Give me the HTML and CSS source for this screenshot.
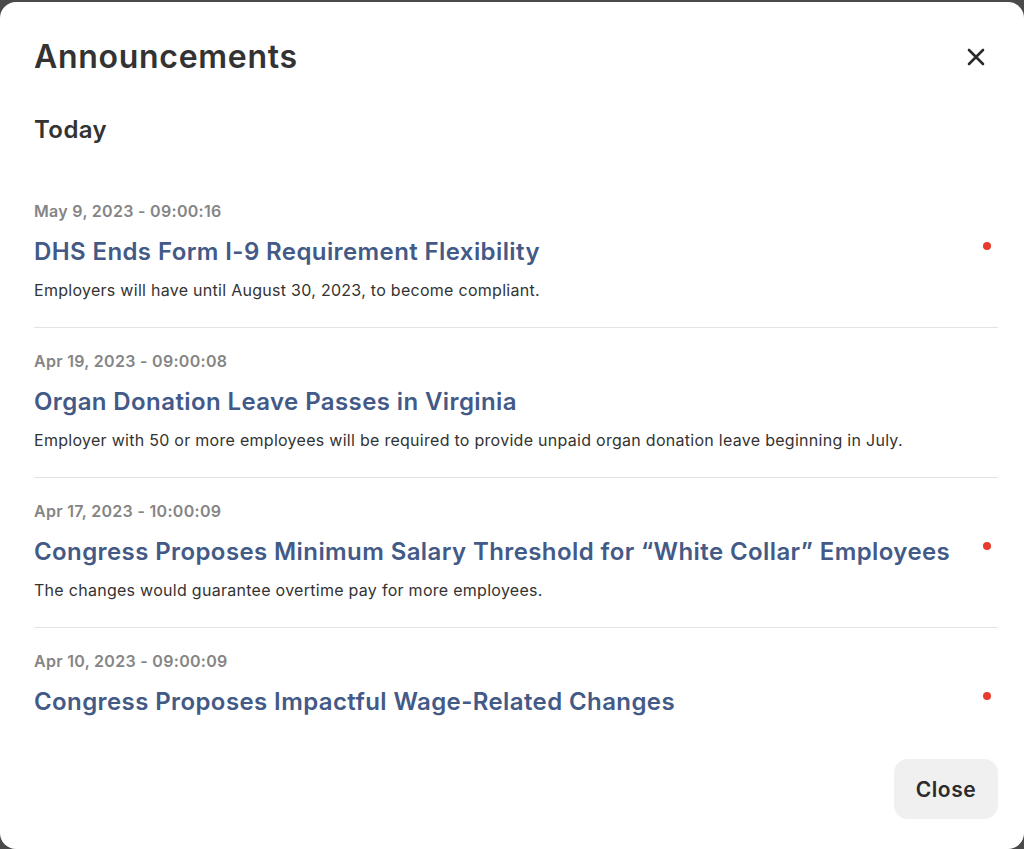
FILE: index.html
```html
<!DOCTYPE html>
<html lang="en">
<head>
  <meta charset="UTF-8" />
  <meta name="viewport" content="width=device-width, initial-scale=1.0"/>
  <title>Announcements</title>
  <link rel="stylesheet" href="styles.css">
</head>
<body>
  <div class="modal">
    <div class="modal-header">
      <h1>Announcements</h1>
      <button class="icon-close" aria-label="Close">
        <svg width="18" height="18" viewBox="0 0 18 18"><path d="M2 2L16 16M16 2L2 16" stroke="#2b2b2b" stroke-width="2.6" stroke-linecap="round"/></svg>
      </button>
    </div>

    <h2 class="group">Today</h2>

    <ul class="list">
      <li class="item">
        <div class="item-body">
          <div class="date">May 9, 2023 - 09:00:16</div>
          <div class="title">DHS Ends Form I-9 Requirement Flexibility</div>
          <div class="desc">Employers will have until August 30, 2023, to become compliant.</div>
        </div>
        <span class="dot"></span>
      </li>
      <li class="item">
        <div class="item-body">
          <div class="date">Apr 19, 2023 - 09:00:08</div>
          <div class="title">Organ Donation Leave Passes in Virginia</div>
          <div class="desc">Employer with 50 or more employees will be required to provide unpaid organ donation leave beginning in July.</div>
        </div>
      </li>
      <li class="item">
        <div class="item-body">
          <div class="date">Apr 17, 2023 - 10:00:09</div>
          <div class="title">Congress Proposes Minimum Salary Threshold for “White Collar” Employees</div>
          <div class="desc">The changes would guarantee overtime pay for more employees.</div>
        </div>
        <span class="dot"></span>
      </li>
      <li class="item">
        <div class="item-body">
          <div class="date">Apr 10, 2023 - 09:00:09</div>
          <div class="title">Congress Proposes Impactful Wage-Related Changes</div>
        </div>
        <span class="dot"></span>
      </li>
    </ul>

    <div class="modal-footer">
      <button class="btn">Close</button>
    </div>
  </div>
</body>
</html>
```

FILE: styles.css
```css
html, body {
  height: 100%;
}
body {
  margin: 0;
  padding-top: 2px;
  box-sizing: border-box;
  background-color: #4a4a4a;
  font-family: Inter, 'Liberation Sans', sans-serif;
  color: #333;
  overflow: hidden;
}
.modal {
  background: white;
  border-radius: 16px;
  height: 100%;
  padding: 0 26px 0 34px;
  position: relative;
}
.modal-header {
  display: flex;
  justify-content: space-between;
  align-items: center;
  height: 110px;
}
h1 {
  margin: 0;
  font-size: 32px;
  font-weight: 600;
  letter-spacing: 0.7px;
  position: relative;
  top: -1px;
}
.icon-close {
  border: none;
  background: transparent;
  padding: 0;
  margin-right: 13px;
  cursor: pointer;
  display: flex;
}
.group {
  margin: 0 0 30px;
  font-size: 24px;
  font-weight: 600;
  line-height: 36px;
  letter-spacing: 0.4px;
}
.list {
  list-style: none;
  margin: 0;
  padding: 0;
}
.item {
  display: flex;
  justify-content: space-between;
  align-items: flex-start;
  height: 150px;
  padding-top: 23px;
  box-sizing: border-box;
  border-bottom: 1px solid #e3e3e3;
}
.item:last-child {
  border-bottom: none;
}
.date {
  font-size: 16px;
  font-weight: 600;
  color: #858585;
  line-height: 20px;
  letter-spacing: 0.3px;
}
.title {
  font-size: 24px;
  font-weight: 600;
  color: #435a87;
  line-height: 32px;
  margin-top: 15px;
  letter-spacing: 0.4px;
}
.desc {
  font-size: 16px;
  line-height: 20px;
  margin-top: 12px;
  letter-spacing: 0.28px;
}
.dot {
  width: 8px;
  height: 8px;
  border-radius: 50%;
  background: #e63b2e;
  margin-top: 41px;
  margin-right: 7px;
  flex-shrink: 0;
}
.modal-footer {
  position: absolute;
  right: 26px;
  bottom: 30px;
}
.btn {
  font-family: inherit;
  font-size: 21px;
  font-weight: 600;
  letter-spacing: 0.6px;
  color: #2b2b2b;
  background: #f0f0f0;
  border: none;
  border-radius: 14px;
  width: 104px;
  height: 60px;
  cursor: pointer;
}
```
